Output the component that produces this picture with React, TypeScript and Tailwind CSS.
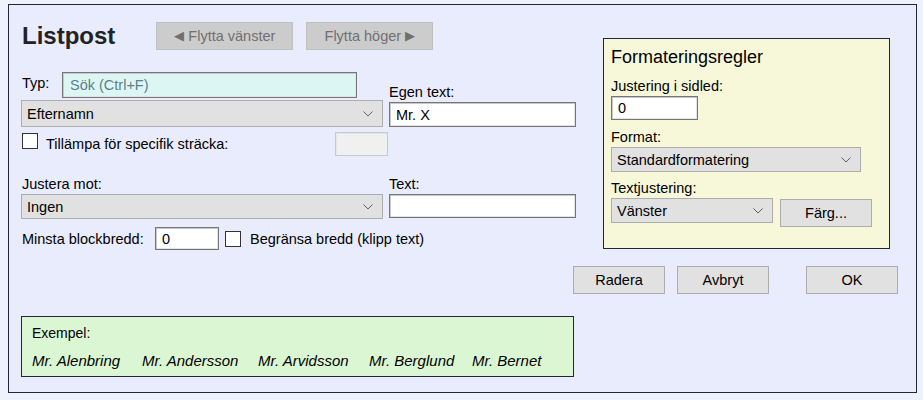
import React from "react";

const Chevron = () => (
  <svg width="10" height="6" viewBox="0 0 10 6" className="shrink-0">
    <path d="M0.5 0.5 L5 5 L9.5 0.5" fill="none" stroke="#606060" strokeWidth="1" />
  </svg>
);

function Select({ value, className }: { value: string; className: string }) {
  return (
    <div
      className={`flex items-center justify-between border border-[#adadad] bg-[#e1e1e1] pl-[5px] pr-[9px] text-[14.5px] text-black ${className}`}
    >
      <span>{value}</span>
      <Chevron />
    </div>
  );
}

function Input({ value, className }: { value: string; className: string }) {
  return (
    <div
      className={`flex items-center border border-[#767676] bg-white pl-[6px] text-[14.5px] text-black shadow-[inset_1px_1px_0_#c9c9c9,inset_-1px_-1px_0_#e3e3e3] ${className}`}
    >
      {value}
    </div>
  );
}

function Check({ className = "" }: { className?: string }) {
  return <div className={`h-[16px] w-[16px] shrink-0 border border-[#333333] bg-white ${className}`} />;
}

function Btn({ label, className }: { label: string; className: string }) {
  return (
    <div
      className={`flex items-center justify-center border border-[#adadad] bg-[#e1e1e1] text-[14.5px] text-black ${className}`}
    >
      {label}
    </div>
  );
}

export default function App() {
  return (
    <div className="h-[400px] w-[923px] bg-[#eef2fd] pl-[8px] pt-[4px] font-['Liberation_Sans',Arial,sans-serif] text-[14.5px] leading-[18px] text-black">
      <div className="flex h-[389px] w-[909px] flex-col border border-[#24243a] bg-[#e9ecfd] pl-[12px]">
        <div className="flex">
          {/* left column */}
          <div className="flex w-[555px] flex-col">
            <div className="mt-[17px] flex h-[28px] items-center">
              <div className="ml-[1px] text-[24px] font-bold leading-[28px] text-[#222222]">Listpost</div>
              <div className="ml-[41px] flex h-[28px] w-[137px] items-center justify-center border border-[#c0c0c0] bg-[#cccccc] text-[14.5px] text-[#707070]">
                <span className="mr-[4px] text-[13px]">◀</span>Flytta vänster
              </div>
              <div className="ml-[13px] flex h-[28px] w-[127px] items-center justify-center border border-[#c0c0c0] bg-[#cccccc] text-[14.5px] text-[#707070]">
                Flytta höger<span className="ml-[4px] text-[13px]">▶</span>
              </div>
            </div>

            <div className="flex">
              <div className="flex w-[362px] flex-col">
                <div className="mt-[22px] flex items-start">
                  <span className="ml-[1px] mt-[2px] w-[40px]">Typ:</span>
                  <div className="flex h-[26px] w-[295px] items-center border border-[#767676] bg-[#dcf7f3] pl-[7px] text-[14.5px] text-[#5f7d8c] shadow-[inset_1px_1px_0_#c9c9c9,inset_-1px_-1px_0_#e3e3e3]">
                    Sök (Ctrl+F)
                  </div>
                </div>
                <Select value="Efternamn" className="mt-[2px] h-[27px] w-[362px]" />
              </div>
              <div className="ml-[6px] flex flex-col justify-end">
                <span className="mb-[1px]">Egen text:</span>
                <Input value="Mr. X" className="h-[25px] w-[187px]" />
              </div>
            </div>

            <div className="mt-[5px] flex items-start">
              <Check className="ml-[1px] mt-[1px]" />
              <span className="ml-[8px] mt-[3px] w-[289px]">Tillämpa för specifik sträcka:</span>
              <div className="h-[24px] w-[53px] border border-[#c9c9c9] bg-[#f0f0f0] shadow-[inset_1px_1px_0_#e6e6e6]" />
            </div>

            <div className="mt-[19px] flex">
              <div className="flex w-[362px] flex-col">
                <span className="ml-[1px]">Justera mot:</span>
                <Select value="Ingen" className="mt-[1px] h-[25px] w-[362px]" />
              </div>
              <div className="ml-[6px] flex flex-col">
                <span>Text:</span>
                <Input value="" className="mt-[1px] h-[24px] w-[187px]" />
              </div>
            </div>

            <div className="mt-[8px] flex items-center">
              <span className="ml-[1px] w-[133px]">Minsta blockbredd:</span>
              <Input value="0" className="h-[23px] w-[64px]" />
              <Check className="ml-[6px]" />
              <span className="ml-[9px]">Begränsa bredd (klipp text)</span>
            </div>
          </div>

          {/* right box */}
          <div className="ml-[27px] mt-[33px] flex h-[211px] w-[287px] flex-col border border-[#24243a] bg-[#f7f7d9] pl-[7px]">
            <div className="mt-[7px] text-[18px] leading-[22px]">Formateringsregler</div>
            <div className="mt-[9px]">Justering i sidled:</div>
            <Input value="0" className="mt-[1px] h-[24px] w-[87px]" />
            <div className="mt-[8px]">Format:</div>
            <Select value="Standardformatering" className="mt-[1px] h-[25px] w-[250px]" />
            <div className="mt-[7px]">Textjustering:</div>
            <div className="mt-[1px] flex items-start">
              <Select value="Vänster" className="h-[25px] w-[162px]" />
              <Btn label="Färg..." className="ml-[7px] mt-[1px] h-[28px] w-[92px]" />
            </div>
          </div>
        </div>

        <div className="mt-[16px] flex">
          <Btn label="Radera" className="ml-[552px] h-[28px] w-[92px]" />
          <Btn label="Avbryt" className="ml-[12px] h-[28px] w-[92px]" />
          <Btn label="OK" className="ml-[37px] h-[28px] w-[92px]" />
        </div>

        <div className="mt-[22px] flex h-[61px] w-[553px] flex-col border border-[#24243a] bg-[#dbf6d3] pl-[10px] text-[14px]">
          <div className="mt-[7px]">Exempel:</div>
          <div className="mt-[10px] flex text-[15px] italic">
            <span className="w-[110px]">Mr. Alenbring</span>
            <span className="w-[116px]">Mr. Andersson</span>
            <span className="w-[111px]">Mr. Arvidsson</span>
            <span className="w-[103px]">Mr. Berglund</span>
            <span>Mr. Bernet</span>
          </div>
        </div>
      </div>
    </div>
  );
}
